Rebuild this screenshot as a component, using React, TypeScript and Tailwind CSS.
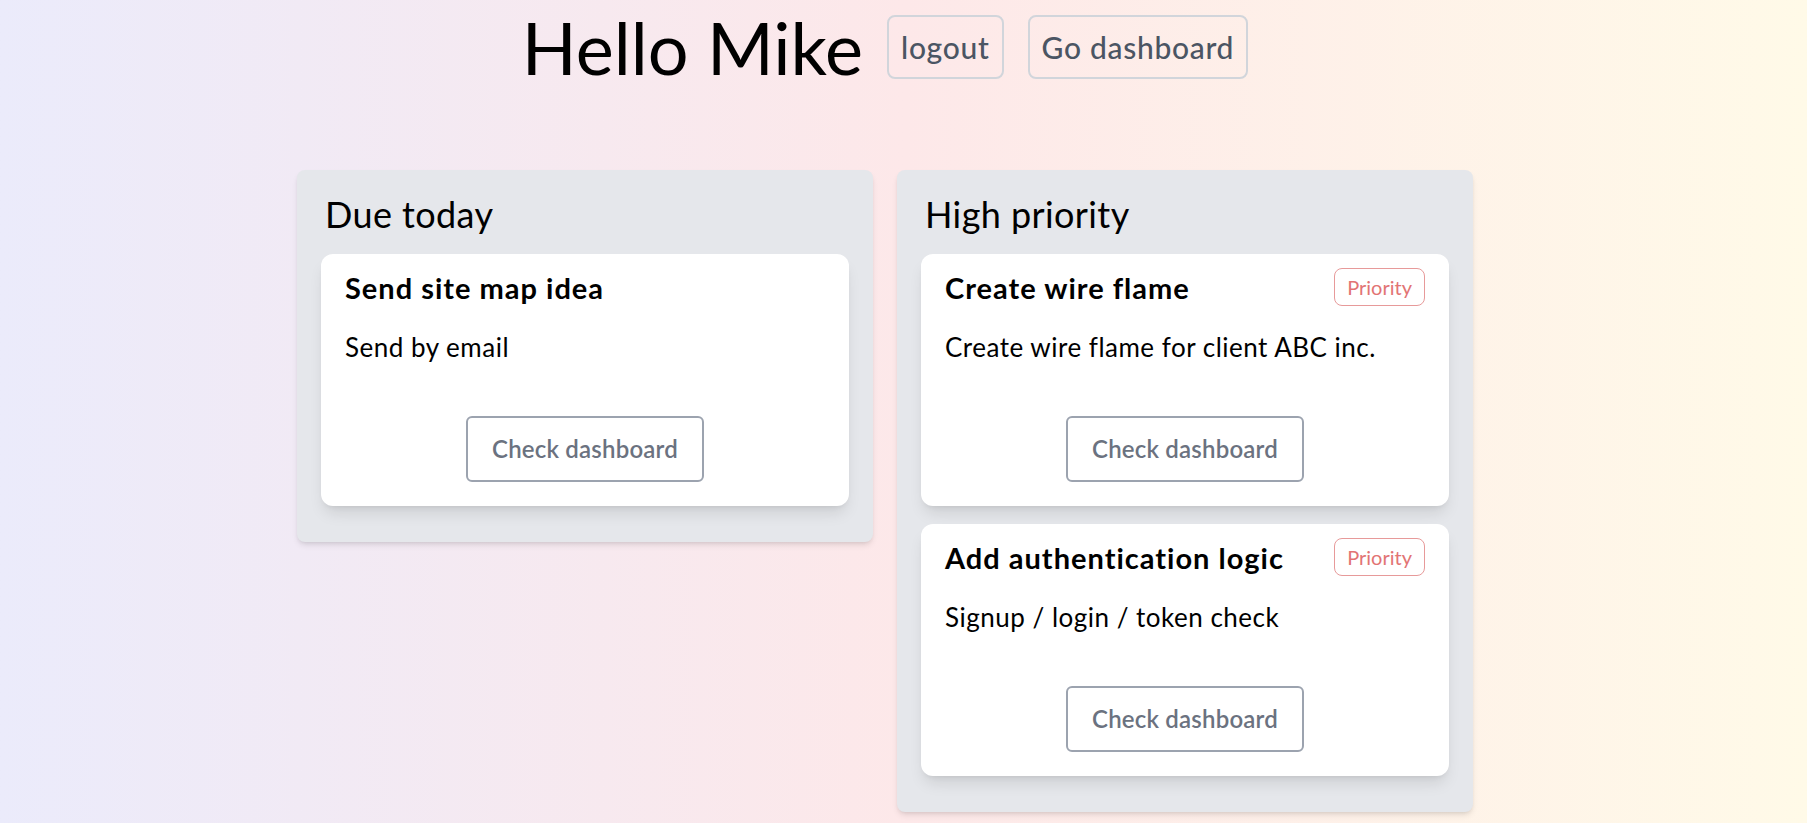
import React from 'react';

interface Task {
    title: string;
    description: string;
    priority?: boolean;
}

const dueToday: Task[] = [{ title: 'Send site map idea', description: 'Send by email' }];

const highPriority: Task[] = [
    { title: 'Create wire flame', description: 'Create wire flame for client ABC inc.', priority: true },
    { title: 'Add authentication logic', description: 'Signup / login / token check', priority: true },
];

function TaskCard({ task }: { task: Task }) {
    return (
        <div className="bg-white rounded-xl shadow-lg px-6 pt-[14px] pb-[24px]">
            <div className="flex items-center justify-between h-[38px]">
                <h3 className="text-[29px] font-bold tracking-[1px] text-black leading-none">{task.title}</h3>
                {task.priority && (
                    <span className="text-xl px-3 py-1 border border-[#e79a9a] text-[#e27474] rounded-lg">
                        Priority
                    </span>
                )}
            </div>
            <p className="mt-[25px] text-[26px] leading-8 tracking-[0.5px] text-black">{task.description}</p>
            <div className="mt-[53px] flex justify-center">
                <button className="px-6 py-[15px] text-2xl font-semibold tracking-[0.2px] text-[#6b7280] border-2 border-[#9ca3af] rounded-md bg-white">
                    Check dashboard
                </button>
            </div>
        </div>
    );
}

function Column({ title, tasks }: { title: string; tasks: Task[] }) {
    return (
        <section className="w-[576px] bg-[#e5e7eb] rounded-lg shadow-md px-6 pt-6 pb-[36px]">
            <h2 className="text-4xl tracking-[0.4px] text-black mb-5 ml-[4px]">{title}</h2>
            <div className="flex flex-col gap-[18px]">
                {tasks.map((t) => (
                    <TaskCard key={t.title} task={t} />
                ))}
            </div>
        </section>
    );
}

export default function App() {
    return (
        <div
            className="min-h-screen w-full bg-gradient-to-r from-[#ebebfb] via-[#fde8e9] to-[#fffae8] pr-[37px]"
            style={{ fontFamily: 'Lato, "Noto Sans", sans-serif' }}
        >
            <header className="flex items-center justify-center gap-6 pt-[11px]">
                <h1 className="text-7xl leading-none text-black">Hello Mike</h1>
                <button className="text-3xl font-medium tracking-[0.7px] text-[#4b5563] px-3 py-3 border-2 border-[#d1d5db] rounded-lg">
                    logout
                </button>
                <button className="text-3xl font-medium tracking-[0.7px] text-[#4b5563] px-3 py-3 border-2 border-[#d1d5db] rounded-lg">
                    Go dashboard
                </button>
            </header>

            <main className="flex justify-center items-start gap-6 mt-[87px]">
                <Column title="Due today" tasks={dueToday} />
                <Column title="High priority" tasks={highPriority} />
            </main>
        </div>
    );
}
